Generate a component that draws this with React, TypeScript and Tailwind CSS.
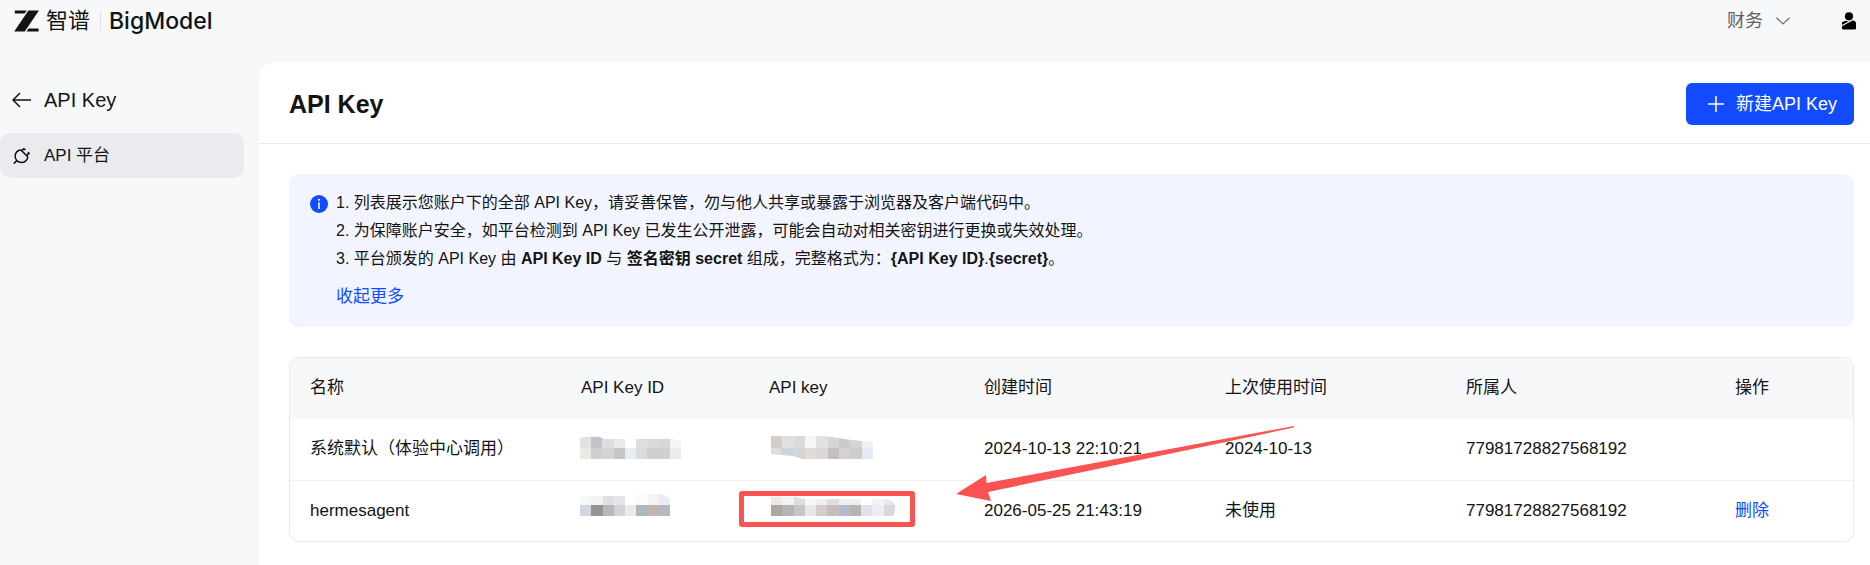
import React from "react";

type Mosaic = {
  width: number;
  clip: string;
  rows: { height: number; cells: string[] }[];
};

type ApiKey = {
  name: string;
  idMosaic: Mosaic;
  keyMosaic: Mosaic;
  createdAt: string;
  lastUsed: string;
  owner: string;
  removable: boolean;
};

const columns = ["名称", "API Key ID", "API key", "创建时间", "上次使用时间", "所属人", "操作"];

const apiKeys: ApiKey[] = [
  {
    name: "系统默认（体验中心调用）",
    idMosaic: {
      width: 101,
      clip: "M0 2Q10 0 20 1L24 3H92Q99 3 101 6V23H0Z",
      rows: [
        { height: 12, cells: ["#dfe1e3", "#c2c2c8", "#dddddd", "#e7e9eb", "#fefefe", "#dedede", "#d5dadd", "#d9d6d5", "#f1f3f5"] },
        { height: 11, cells: ["#ebe9e5", "#cfcfcf", "#d5d4d2", "#c3c7ca", "#e8edf2", "#dedad7", "#cccfce", "#cfcfcf", "#e9edf1"] },
      ],
    },
    keyMosaic: {
      width: 102,
      clip: "M0 0H54L80 4L102 6V23H32L22 20L0 18Z",
      rows: [
        { height: 12, cells: ["#d2cccb", "#dfe1dd", "#dadada", "#f6f6f6", "#e2e1e1", "#d8d4d1", "#cbcacc", "#d3d4d5", "#ebf1f7"] },
        { height: 11, cells: ["#dbdde0", "#cdd5dc", "#d5d5d4", "#e1dcd7", "#dad7d6", "#c4bfbc", "#d2d2d5", "#cbcecd", "#e5ebf0"] },
      ],
    },
    createdAt: "2024-10-13 22:10:21",
    lastUsed: "2024-10-13",
    owner: "77981728827568192",
    removable: false,
  },
  {
    name: "hermesagent",
    idMosaic: {
      width: 90,
      clip: "M0 3L22 2H45L56 0H80Q88 1 90 6V22H0Z",
      rows: [
        { height: 11, cells: ["#f7f8f9", "#f3f3f4", "#dedfe1", "#e5e6e9", "#fefefe", "#fafbfd", "#f5f4f3", "#ebecf0"] },
        { height: 11, cells: ["#cfd7e0", "#98919a", "#b8b8ba", "#d2d3d9", "#e7ece8", "#adb7c2", "#c2b5b1", "#b2bbbf"] },
      ],
    },
    keyMosaic: {
      width: 124,
      clip: "M0 3H23L34 5H110Q124 5 124 12V16Q124 21 121 22H0Z",
      rows: [
        { height: 11, cells: ["#ebeae9", "#f4f3f2", "#dddddc", "#f6f7f7", "#efeeee", "#dededf", "#eeeff0", "#efefef", "#fefefe", "#f3f4f6", "#e7e8ed"] },
        { height: 11, cells: ["#aea6a1", "#b5b5b5", "#c3c7c9", "#e9e6e6", "#d2cdca", "#c4bfbb", "#b1bdcb", "#b5b5b6", "#dfe3e9", "#eaeff5", "#d8d9df"] },
      ],
    },
    createdAt: "2026-05-25 21:43:19",
    lastUsed: "未使用",
    owner: "77981728827568192",
    removable: true,
  },
];

// Pixelated block that hides a secret value
const Redacted = ({ mosaic, id }: { mosaic: Mosaic; id: string }) => (
  <svg className="block" width={mosaic.width} height="24" viewBox={`0 0 ${mosaic.width} 24`} shapeRendering="crispEdges" aria-label="已隐藏" role="img">
    <clipPath id={id}>
      <path d={mosaic.clip} />
    </clipPath>
    <g clipPath={`url(#${id})`}>
      {mosaic.rows.map((row, r) =>
        row.cells.map((fill, c) => {
          const step = mosaic.width / row.cells.length;
          return (
            <rect
              key={`${r}-${c}`}
              x={Math.round(c * step)}
              y={r * mosaic.rows[0].height}
              width={Math.ceil(step)}
              height={row.height}
              fill={fill}
            />
          );
        })
      )}
    </g>
  </svg>
);

const Header = () => (
  <header className="flex h-[63px] items-start justify-between px-[14px]">
    <a href="#" className="flex h-[42px] items-center text-[#131313]">
      <svg width="25" height="22" viewBox="0 0 25 22" fill="#131313">
        <path d="M0.8 0.5H12.6L10.6 3.6H0.8Z" />
        <path d="M14.4 0.5H24.9L10.8 21.5H0.2Z" />
        <path d="M14.6 18.4H24.6V21.5H12.5Z" />
      </svg>
      <span className="ml-[7px] text-[22px] leading-[28px]">智谱</span>
      <span className="ml-[10px] h-5 w-px bg-[#dfe0e3]" />
      <span className="ml-2 font-['Inter','Noto_Sans_CJK_SC',sans-serif] text-[23px] leading-[28px] font-medium">BigModel</span>
    </a>
    <div className="flex h-[42px] items-center">
      <button type="button" className="flex items-center gap-[13px] text-[18px] leading-[28px] text-[#5f6166]">
        财务
        <svg width="14" height="8" viewBox="0 0 14 8" fill="none" stroke="#6c6e73" strokeWidth="1.2">
          <path d="M0.5 0.7L7 7L13.5 0.7" />
        </svg>
      </button>
      <button type="button" aria-label="账户" className="ml-[52px]">
        <svg width="14" height="18" viewBox="0 0 14 18" fill="#000">
          <circle cx="7" cy="4.3" r="4.1" />
          <path d="M0 10.2L3.6 8.8L6.5 9.6L0 12.9Z" />
          <path d="M0 14.3L10.6 8.4Q14 8.8 14 11.4V16.2Q14 17.6 12.6 17.6H1.4Q0 17.6 0 16.2Z" />
        </svg>
      </button>
    </div>
  </header>
);

const Sidebar = () => (
  <aside className="w-[259px] shrink-0 pr-[15px]">
    <a href="#" className="mt-[21px] flex h-8 items-center pl-3 text-[20px] leading-[28px]">
      <svg width="20" height="16" viewBox="0 0 20 16" fill="none" stroke="#131313" strokeWidth="1.5">
        <path d="M19 8H1M8 1L1 8L8 15" />
      </svg>
      <span className="ml-3">API Key</span>
    </a>
    <nav className="mt-[17px]">
      <a href="#" className="flex h-[45px] items-center rounded-[10px] bg-[#eaebee] pl-[13px] text-[17px] leading-[28px]">
        <svg width="18" height="18" viewBox="0 0 18 18" fill="none" stroke="#131313" strokeWidth="1.5">
          <path d="M6.2 3.2Q7.6 2.6 8.6 3.6L14.2 9.2Q15.2 10.2 14.4 11.6Q12.6 15.4 8.6 15.4Q5.6 15.4 3.8 13.4Q1.6 11 2.2 7.8Q3 4.4 6.2 3.2Z" />
          <path d="M8.8 3.8L11 1.2M13.6 8.6L16.4 5.8M11 1.6L12.4 3M14.8 5.2L16.6 7M3.8 13.6L0.8 16.6" />
        </svg>
        <span className="ml-[13px]">API 平台</span>
      </a>
    </nav>
  </aside>
);

const Notice = () => (
  <section className="flex rounded-[10px] bg-[#f2f5ff] pt-[15px] pr-5 pb-[16px] pl-[21px]">
    <svg className="mt-[6px] shrink-0" width="18" height="18" viewBox="0 0 18 18">
      <circle cx="9" cy="9" r="9" fill="#134cff" />
      <circle cx="9" cy="4.8" r="1.1" fill="#fff" />
      <path d="M9 7.3V14" stroke="#fff" strokeWidth="1.5" />
    </svg>
    <div className="ml-2">
      <ol className="text-[16px] leading-[28px]">
        <li>1. 列表展示您账户下的全部 API Key，请妥善保管，勿与他人共享或暴露于浏览器及客户端代码中。</li>
        <li>2. 为保障账户安全，如平台检测到 API Key 已发生公开泄露，可能会自动对相关密钥进行更换或失效处理。</li>
        <li>
          3. 平台颁发的 API Key 由 <strong>API Key ID</strong> 与 <strong>签名密钥 secret</strong> 组成，完整格式为：
          <strong>{"{API Key ID}"}</strong>.<strong>{"{secret}"}</strong>。
        </li>
      </ol>
      <button type="button" className="mt-[10px] text-[17px] leading-[28px] text-[#134cff]">
        收起更多
      </button>
    </div>
  </section>
);

const KeyTable = () => (
  <div className="relative mt-[30px]">
    <div className="overflow-hidden rounded-[10px] border border-[#e9eaec]">
      <table className="w-full table-fixed text-left text-[17px] leading-[28px]">
        <colgroup>
          <col className="w-[271px]" />
          <col className="w-[188px]" />
          <col className="w-[215px]" />
          <col className="w-[241px]" />
          <col className="w-[241px]" />
          <col className="w-[269px]" />
          <col />
        </colgroup>
        <thead className="bg-[#f7f8fa]">
          <tr className="h-[61px]">
            {columns.map((column) => (
              <th key={column} className="pl-5 pb-px font-normal">
                {column}
              </th>
            ))}
          </tr>
        </thead>
        <tbody>
          {apiKeys.map((item, index) => (
            <tr key={item.name} className="h-[61px] border-b border-[#f0f1f2] last:border-b-0">
              <td className="pl-5">{item.name}</td>
              <td className={index === 0 ? "pb-0.5 pl-[19px]" : "pb-2.5 pl-[19px]"}>
                <Redacted mosaic={item.idMosaic} id={`id-${index}`} />
              </td>
              <td className={index === 0 ? "pb-0.5 pl-[22px]" : "pb-2.5 pl-[22px]"}>
                <Redacted mosaic={item.keyMosaic} id={`key-${index}`} />
              </td>
              <td className="pl-5">{item.createdAt}</td>
              <td className="pl-5">{item.lastUsed}</td>
              <td className="pl-5">{item.owner}</td>
              <td className="pl-5">
                {item.removable && (
                  <button type="button" className="text-[#134cff]">
                    删除
                  </button>
                )}
              </td>
            </tr>
          ))}
        </tbody>
      </table>
    </div>

    {/* Annotation: frame round the new key and the arrow to it */}
    <div className="pointer-events-none absolute top-[134px] left-[450px] h-[36px] w-[176px] rounded-[3px] border-5 border-[#fb5252]" />
    <svg className="pointer-events-none absolute top-[67px] left-[666px]" width="340" height="80" viewBox="0 0 340 80" fill="#fb5252">
      <path d="M1 70L31 51L31.500 59L339 2L339 3.500L33 68L36 77Z" />
    </svg>
  </div>
);

const App = () => {
  return (
    <div className="flex min-h-screen flex-col bg-[#f7f8fa] font-['Liberation_Sans','Noto_Sans_CJK_SC',sans-serif] text-[#131313]">
      <Header />
      <div className="flex flex-1">
        <Sidebar />
        <main className="min-w-0 flex-1 rounded-tl-[15px] bg-white">
          <div className="flex h-[81px] items-center justify-between border-b border-[#e9eaec] pt-0.5 pr-4 pl-[30px]">
            <h1 className="text-[25px] leading-[32px] font-bold">API Key</h1>
            <button type="button" className="flex h-[42px] items-center rounded-[6px] bg-[#134cff] pr-[17px] pl-[22px] text-[18px] leading-[28px] text-white">
              <svg width="16" height="16" viewBox="0 0 16 16" stroke="#fff" strokeWidth="1.5">
                <path d="M8 0V16M0 8H16" />
              </svg>
              <span className="ml-3">新建API Key</span>
            </button>
          </div>
          <div className="pt-[30px] pr-4 pb-6 pl-[30px]">
            <Notice />
            <KeyTable />
          </div>
        </main>
      </div>
    </div>
  );
};

export default App;
